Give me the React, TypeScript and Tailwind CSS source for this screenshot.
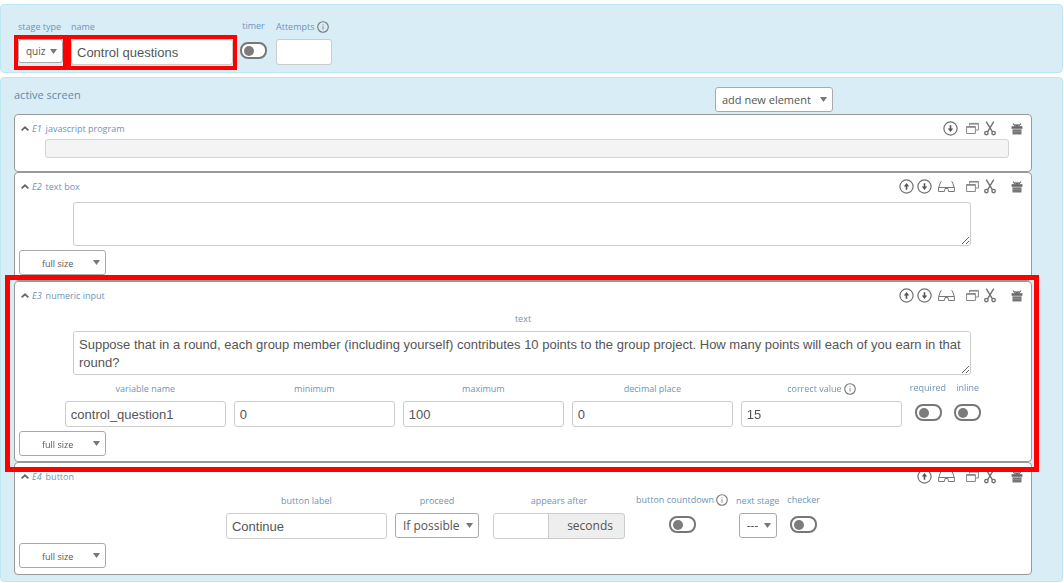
import React, { useId } from "react";

const sans = "font-['Open_Sans','Noto_Sans',sans-serif]";
const labelText = "text-[9px] text-[#7094b8]";

function InfoIcon() {
  return (
    <svg className="ml-[2px] h-3 w-3 shrink-0" viewBox="0 0 12 12" fill="none" aria-hidden="true">
      <circle cx="6" cy="6" r="5.3" stroke="#777" strokeWidth="1.1" />
      <path d="M6 5.2V8.6M6 3.3V4.3" stroke="#888" strokeWidth="1" />
    </svg>
  );
}

function ArrowIcon({ down = false }: { down?: boolean }) {
  return (
    <svg className="h-[15px] w-[15px]" viewBox="0 0 15 15" fill="none" aria-hidden="true">
      <circle cx="7.5" cy="7.5" r="6.6" stroke="#707070" strokeWidth="1.2" />
      {down ? (
        <path d="M6.7 4.2h1.6v3.4h1.9L7.5 11 4.8 7.6h1.9z" fill="#555" />
      ) : (
        <path d="M6.7 10.8h1.6V7.4h1.9L7.5 4 4.8 7.4h1.9z" fill="#555" />
      )}
    </svg>
  );
}

function GlassesIcon() {
  return (
    <svg className="h-[15px] w-5" viewBox="0 0 20 15" fill="none" stroke="#777" strokeWidth="1" aria-hidden="true">
      <path d="M3.6 2.6 2.6 3 0.8 8.3M13.4 2.6 14.4 3 16.2 8.3M0.6 8.5H16.4V12.5H10.6L9.9 9.5H7.1L6.4 12.5H0.6z" />
    </svg>
  );
}

function CopyIcon() {
  return (
    <svg className="h-[15px] w-[13px]" viewBox="0 0 13 15" fill="none" stroke="#888" aria-hidden="true">
      <path d="M3.5 4.5V2.4H12.4V9H9.6" />
      <path d="M3.5 3H12.4" strokeWidth="1.2" />
      <path d="M0.6 5.5H9.4V12.5H0.6z" />
      <path d="M0.6 6.2H9.4" strokeWidth="1.2" />
    </svg>
  );
}

function ScissorsIcon() {
  return (
    <svg className="h-[15px] w-3" viewBox="0 0 12 15" fill="none" stroke="#707070" strokeWidth="1.4" aria-hidden="true">
      <path d="M2.2 0.6 8.3 10.6M9.8 0.6 3.7 10.6" />
      <circle cx="2.4" cy="12.1" r="1.7" />
      <circle cx="9.6" cy="12.1" r="1.7" />
    </svg>
  );
}

function GiftIcon() {
  return (
    <svg className="h-[15px] w-3" viewBox="0 0 12 15" aria-hidden="true">
      <path d="M2 2.6 4.6 5.4M10 2.6 7.4 5.4M4.6 3 6 5.4 7.4 3" stroke="#666" strokeWidth="1.2" fill="none" />
      <path d="M0.6 5.2h10.8v2.6H0.6z" fill="#666" />
      <path d="M1.5 8.4h9V13.5h-9z" fill="#777" />
      <path d="M1.5 8.1h9M1.5 10.6h9" stroke="#999" strokeWidth="0.6" />
    </svg>
  );
}

function IconButton({ name, className = "", children }: { name: string; className?: string; children: React.ReactNode }) {
  return (
    <button type="button" aria-label={name} className={`flex cursor-pointer ${className}`}>
      {children}
    </button>
  );
}

function Select({ id, name, options, className }: { id?: string; name?: string; options: string[]; className: string }) {
  return (
    <div className="relative w-fit">
      <select
        id={id}
        aria-label={name}
        className={`block appearance-none rounded-[3px] border border-[#aaa] bg-white text-[#555] ${sans} ${className}`}
      >
        {options.map((o) => (
          <option key={o}>{o}</option>
        ))}
      </select>
      <svg className="pointer-events-none absolute top-[10px] right-[6px] h-[5px] w-[7px]" viewBox="0 0 7 5" aria-hidden="true">
        <path d="M0 0h7L3.5 5z" fill="#777" />
      </svg>
    </div>
  );
}

function Field({
  label,
  info = false,
  center = false,
  indent = false,
  children,
}: {
  label: string;
  info?: boolean;
  center?: boolean;
  indent?: boolean;
  children: (id: string) => React.ReactNode;
}) {
  const id = useId();
  return (
    <div className={`flex flex-col ${center ? "items-center" : "items-start"}`}>
      <label htmlFor={id} className={`mb-[6px] flex h-3 items-center leading-3 ${indent ? "pl-1" : ""} ${labelText}`}>
        {label}
        {info && <InfoIcon />}
      </label>
      {children(id)}
    </div>
  );
}

function Toggle({ label, info = false }: { label: string; info?: boolean }) {
  const id = useId();
  return (
    <div className="flex flex-col items-center">
      <label htmlFor={id} className={`mb-[11px] flex h-[10px] items-center leading-[10px] ${labelText}`}>
        {label}
        {info && <InfoIcon />}
      </label>
      <input
        id={id}
        type="checkbox"
        className="flex h-[17px] w-[27px] appearance-none items-center rounded-[8px] border-2 border-[#777] bg-white pl-[2px] before:block before:h-[10px] before:w-[10px] before:rounded-full before:bg-[#7c7c7c] checked:justify-end checked:pr-[2px]"
      />
    </div>
  );
}

const inputBox =
  "block h-[26px] rounded-[3px] border border-[#ccc] bg-white px-[5px] font-['Liberation_Sans',Arial,sans-serif] text-[13px] text-[#555]";
const areaBox =
  "mr-[60px] ml-[58px] block h-11 w-auto resize rounded-[3px] border border-[#ccc] bg-white px-[5px] py-1 font-['Liberation_Sans',Arial,sans-serif] text-[13px] leading-[18px] text-[#555]";

function FullSize() {
  return (
    <div className="mt-1 ml-1">
      <Select name="element width" options={["full size", "half size"]} className="h-[25px] w-[87px] pt-[3px] pl-[22px] text-[9px]" />
    </div>
  );
}

function Card({
  id,
  title,
  up = false,
  down = false,
  glasses = false,
  children,
}: {
  id: string;
  title: string;
  up?: boolean;
  down?: boolean;
  glasses?: boolean;
  children: React.ReactNode;
}) {
  return (
    <section className="rounded-[4px] border border-[#999] bg-white">
      <header className="flex h-6 items-center pt-[3px] pr-2 pl-[6px]">
        <button type="button" aria-label={`collapse ${id}`} className="flex">
          <svg className="h-[5px] w-2" viewBox="0 0 8 5" fill="none" stroke="#666" strokeWidth="1.8" aria-hidden="true">
            <path d="M0.6 4.3 4 1.3 7.4 4.3" />
          </svg>
        </button>
        <h2 className={`ml-[3px] flex gap-1 leading-3 ${labelText}`}>
          <i>{id}</i>
          <span>{title}</span>
        </h2>
        <div className="ml-auto flex items-center">
          {up && (
            <IconButton name="move up" className="mr-[3px]">
              <ArrowIcon />
            </IconButton>
          )}
          {down && (
            <IconButton name="move down">
              <ArrowIcon down />
            </IconButton>
          )}
          {glasses && (
            <IconButton name="visibility" className={down ? "ml-[6px]" : "ml-[3px]"}>
              <GlassesIcon />
            </IconButton>
          )}
          <IconButton name="copy" className="ml-2">
            <CopyIcon />
          </IconButton>
          <IconButton name="cut" className="ml-[5px]">
            <ScissorsIcon />
          </IconButton>
          <IconButton name="delete" className="ml-[15px]">
            <GiftIcon />
          </IconButton>
        </div>
      </header>
      {children}
    </section>
  );
}

const numericFields = [
  { label: "variable name", value: "control_question1" },
  { label: "minimum", value: "0" },
  { label: "maximum", value: "100" },
  { label: "decimal place", value: "0" },
  { label: "correct value", value: "15", info: true },
];

export default function App() {
  return (
    <main className={`flex flex-col gap-1 bg-white pt-1 pr-px ${sans}`}>
      <section className="flex items-start rounded-[4px] border border-[#bce8f1] bg-[#d9edf7] pt-4 pb-[2px] pl-[13px]">
        <Field label="stage type" indent>
          {(id) => (
            <div className="-mt-1 h-[35px] border-4 border-[#f00]">
              <Select id={id} options={["quiz", "standard"]} className="h-6 w-[45px] pt-px pl-[7px] text-[10px]" />
            </div>
          )}
        </Field>
        <Field label="name" indent>
          {(id) => (
            <div className="-mt-1 h-[35px] border-4 border-[#f00]">
              <input id={id} defaultValue="Control questions" className={`${inputBox} w-[162px]`} />
            </div>
          )}
        </Field>
        <div className="ml-[3px]">
          <Toggle label="timer" />
        </div>
        <div className="ml-[9px]">
          <Field label="Attempts" info>
            {(id) => <input id={id} className={`${inputBox} w-14`} />}
          </Field>
        </div>
      </section>

      <section className="rounded-[4px] border border-[#bce8f1] bg-[#d9edf7] pr-[30px] pb-[6px] pl-[13px]">
        <div className="flex h-9 items-start justify-between">
          <h1 className="pt-[9px] text-[11px] leading-4 text-[#5f8bad]">active screen</h1>
          <div className="mt-[9px] mr-[199px]">
            <Select name="add new element" options={["add new element"]} className="h-[25px] w-[118px] pt-[2px] pl-[6px] text-[11px]" />
          </div>
        </div>

        <Card id="E1" title="javascript program" down>
          <div className="mr-[22px] mb-[13px] ml-[30px] h-[19px] rounded-[3px] border border-[#d4d4d4] bg-[#f4f4f4]" />
        </Card>

        <Card id="E2" title="text box" up down glasses>
          <div className="flex flex-col pt-[5px] pb-[5px]">
            <textarea aria-label="text box content" className={areaBox} />
            <FullSize />
          </div>
        </Card>

        <div className="relative">
          <Card id="E3" title="numeric input" up down glasses>
            <div className="flex flex-col pt-[7px] pb-[5px]">
              <label htmlFor="question-text" className={`mb-[6px] text-center leading-3 ${labelText}`}>
                text
              </label>
              <textarea
                id="question-text"
                className={areaBox}
                defaultValue="Suppose that in a round, each group member (including yourself) contributes 10 points to the group project. How many points will each of you earn in that round?"
              />
              <div className="mt-2 flex justify-center gap-2">
                {numericFields.map((f) => (
                  <Field key={f.label} label={f.label} info={f.info} center>
                    {(id) => <input id={id} defaultValue={f.value} className={`${inputBox} w-[161px]`} />}
                  </Field>
                ))}
                <Toggle label="required" />
                <Toggle label="inline" />
              </div>
              <FullSize />
            </div>
          </Card>
          <div className="pointer-events-none absolute -top-[6px] -right-[7px] -bottom-[10px] -left-[9px] z-10 border-5 border-[#f00]" />
        </div>

        <Card id="E4" title="button" up glasses>
          <div className="flex flex-col pt-2 pb-[6px]">
            <div className="flex justify-center">
              <Field label="button label" center>
                {(id) => <input id={id} defaultValue="Continue" className={`${inputBox} w-[161px]`} />}
              </Field>
              <div className="ml-2">
                <Field label="proceed" center>
                  {(id) => <Select id={id} options={["If possible", "Always"]} className="h-[25px] w-[84px] pt-px pl-[7px] text-[12px]" />}
                </Field>
              </div>
              <div className="ml-[14px]">
                <Field label="appears after" center>
                  {(id) => (
                    <div className="flex h-[26px] w-[132px] overflow-hidden rounded-[3px] border border-[#ccc] bg-[#eee]">
                      <input id={id} className="w-[55px] border-r border-[#ccc] bg-white px-[5px] text-[13px] text-[#555]" />
                      <span className="flex-1 pr-[11px] text-right text-[12px] leading-6 text-[#555]">seconds</span>
                    </div>
                  )}
                </Field>
              </div>
              <div className="ml-[11px]">
                <Toggle label="button countdown" info />
              </div>
              <div className="ml-2">
                <Field label="next stage" center>
                  {(id) => <Select id={id} options={["---"]} className="h-[25px] w-[38px] pl-[7px] text-[12px]" />}
                </Field>
              </div>
              <div className="ml-2">
                <Toggle label="checker" />
              </div>
            </div>
            <FullSize />
          </div>
        </Card>
      </section>
    </main>
  );
}
